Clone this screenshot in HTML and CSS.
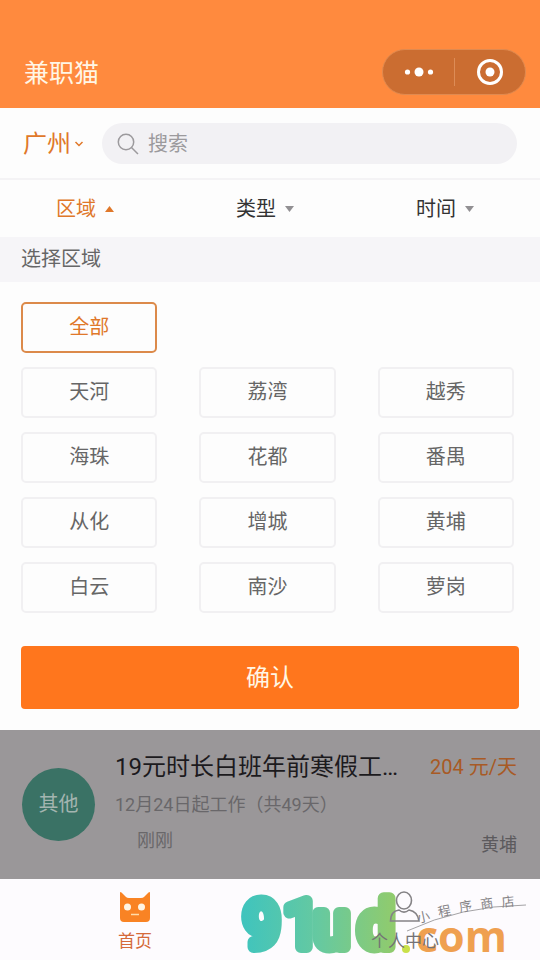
FILE: index.html
```html
<!DOCTYPE html>
<html lang="zh-CN">
<head>
<meta charset="utf-8">
<meta name="viewport" content="width=device-width, initial-scale=1">
<title>兼职猫</title>
<link rel="stylesheet" href="styles.css">
</head>
<body>
<header class="header">
  <h1 class="header-title">兼职猫</h1>
  <div class="capsule">
    <button class="capsule-btn" type="button" aria-label="更多">
      <svg width="32" height="12" viewBox="0 0 32 12" fill="#fff"><circle cx="4.500" cy="6" r="2.600"/><circle cx="16" cy="6" r="4.500"/><circle cx="27.500" cy="6" r="2.600"/></svg>
    </button>
    <button class="capsule-btn" type="button" aria-label="关闭">
      <svg width="28" height="28" viewBox="0 0 28 28"><circle cx="14" cy="14" r="11.500" fill="none" stroke="#fff" stroke-width="3"/><circle cx="14" cy="14" r="4.500" fill="#fff"/></svg>
    </button>
  </div>
</header>

<div class="search-row">
  <button class="city" type="button">广州<svg width="10" height="8" viewBox="0 0 10 8"><path d="M1.500 2 5 5.500 8.500 2" fill="none" stroke="currentColor" stroke-width="1.500"/></svg></button>
  <label class="search">
    <svg width="22" height="22" viewBox="0 0 22 22" fill="none" stroke="#9c9a9d" stroke-width="1.500"><circle cx="9" cy="9" r="7.700"/><path d="M14.500 14.500 21 21"/></svg>
    <input class="search-input" type="search" placeholder="搜索" aria-label="搜索">
  </label>
</div>

<nav class="filters">
  <button class="filter filter-active" type="button">区域<svg width="9" height="6" viewBox="0 0 9 6"><path d="M0 6 4.500 0 9 6Z" fill="currentColor"/></svg></button>
  <button class="filter" type="button">类型<svg width="9" height="6" viewBox="0 0 9 6"><path d="M0 0H9L4.500 6Z" fill="#929093"/></svg></button>
  <button class="filter" type="button">时间<svg width="9" height="6" viewBox="0 0 9 6"><path d="M0 0H9L4.500 6Z" fill="#929093"/></svg></button>
</nav>

<h2 class="section-title">选择区域</h2>

<section class="panel">
  <div class="areas">
    <button class="area area-all" type="button">全部</button>
    <button class="area" type="button">天河</button>
    <button class="area" type="button">荔湾</button>
    <button class="area" type="button">越秀</button>
    <button class="area" type="button">海珠</button>
    <button class="area" type="button">花都</button>
    <button class="area" type="button">番禺</button>
    <button class="area" type="button">从化</button>
    <button class="area" type="button">增城</button>
    <button class="area" type="button">黄埔</button>
    <button class="area" type="button">白云</button>
    <button class="area" type="button">南沙</button>
    <button class="area" type="button">萝岗</button>
  </div>
  <button class="confirm" type="button">确认</button>
</section>

<main class="jobs">
  <article class="job">
    <span class="job-type">其他</span>
    <div class="job-body">
      <div class="job-line">
        <h3 class="job-title">19元时长白班年前寒假工作招聘</h3>
        <span class="job-pay">204 元/天</span>
      </div>
      <p class="job-date">12月24日起工作（共49天）</p>
      <div class="job-line job-foot">
        <span class="job-time">刚刚</span>
        <span class="job-place">黄埔</span>
      </div>
    </div>
  </article>
</main>

<footer class="tabbar">
  <svg class="stamp" width="290" height="80" viewBox="0 0 290 80">
    <defs>
      <linearGradient id="brand" gradientUnits="userSpaceOnUse" x1="3" y1="0" x2="155" y2="0">
        <stop offset="0" stop-color="#40c4bd"/><stop offset="0.500" stop-color="#66c9a0"/><stop offset="1" stop-color="#91cb6c"/>
      </linearGradient>
    </defs>
    <text class="stamp-brand" y="68" x="4 44 74 118" fill="url(#brand)" stroke="url(#brand)">91ud</text>
    <circle cx="166" cy="70" r="4" fill="#c9e04a"/>
    <text class="stamp-com" x="176" y="73">com</text>
    <path d="M167 52Q220 27 286 26" fill="none" stroke="#8d8b8e" stroke-width="0.800"/>
    <g class="stamp-note">
      <text transform="translate(178 44) rotate(-12)">小</text>
      <text transform="translate(199 38) rotate(-12)">程</text>
      <text transform="translate(220 33) rotate(-10)">序</text>
      <text transform="translate(241 30) rotate(-8)">商</text>
      <text transform="translate(262 28) rotate(-6)">店</text>
    </g>
  </svg>
  <a class="tab tab-active" href="#home">
    <svg width="32" height="32" viewBox="0 0 32 32"><path d="M1 2Q1 0 3 2L7 6Q8 7 10 7H22Q24 7 25 6L29 2Q31 0 31 2V27Q31 31 27 31H5Q1 31 1 27Z" fill="#f98324"/><circle cx="8.500" cy="16" r="3.500" fill="#fff5e4"/><circle cx="22.500" cy="16" r="3.500" fill="#fff5e4"/><path d="M12 23.500H20" stroke="#ffdcaa" stroke-width="1.500"/></svg>
    首页
  </a>
  <a class="tab" href="#me">
    <svg width="32" height="32" viewBox="0 0 32 32" fill="none" stroke="#858386" stroke-width="1.600"><ellipse cx="15" cy="9.500" rx="7.500" ry="8.500"/><path d="M10 19C4 20 2 23 1.500 30H30C29 23 26 20 20 19 17 21.500 13 21.500 10 19Z"/></svg>
    个人中心
  </a>
</footer>
</body>
</html>
```
FILE: styles.css
```css
* { box-sizing: border-box; }

body {
  margin: 0;
  min-height: 100vh;
  display: flex;
  flex-direction: column;
  background: #fdfdfd;
  color: #333;
  font-family: Roboto, "Noto Sans CJK SC", sans-serif;
  font-size: 20px;
  line-height: 28px;
}

h1, h2, h3, p { margin: 0; font-weight: 400; }

button {
  margin: 0;
  padding: 0;
  border: 0;
  background: none;
  color: inherit;
  font: inherit;
}

svg { display: block; flex: none; }

.header {
  display: flex;
  align-items: center;
  justify-content: space-between;
  padding: 49px 14px 13px 24px;
  background: #ff8a3e;
}

.header-title { padding-top: 4px; color: #fff6e6; font-size: 25px; }

.capsule {
  display: flex;
  width: 144px;
  height: 46px;
  border: 1px solid #e08a50;
  border-radius: 23px;
  background: #cb6d31;
}

.capsule-btn {
  flex: 1;
  display: flex;
  align-items: center;
  justify-content: center;
}

.capsule-btn + .capsule-btn { position: relative; }

.capsule-btn + .capsule-btn::before {
  content: "";
  position: absolute;
  left: 0;
  top: 8px;
  bottom: 8px;
  width: 1px;
  background: #dd8c56;
}

.search-row {
  display: flex;
  align-items: center;
  gap: 18px;
  padding: 15px 23px 14px;
  border-bottom: 2px solid #f4f3f5;
}

.city {
  display: flex;
  align-items: center;
  gap: 3px;
  color: #e0782a;
  font-size: 24px;
}

.search {
  flex: 1;
  display: flex;
  align-items: center;
  gap: 9px;
  height: 41px;
  padding: 0 15px;
  border-radius: 21px;
  background: #f2f1f4;
}

.search-input {
  flex: 1;
  min-width: 0;
  padding: 0;
  border: 0;
  outline: 0;
  background: none;
  font: inherit;
}

.search-input::placeholder { color: #9c9a9d; }

.filters { display: grid; grid-template-columns: repeat(3, 1fr); }

.filter {
  display: flex;
  align-items: center;
  justify-content: center;
  gap: 9px;
  height: 57px;
  padding-right: 10px;
}

.filter-active { color: #e0782a; }

.section-title {
  padding: 8px 21px 9px;
  background: #f6f5f8;
  color: #666;
  font-size: 20px;
}

.panel { padding: 20px 21px 21px; }

.areas {
  display: grid;
  grid-template-columns: repeat(3, 1fr);
  gap: 14px 42px;
  padding-right: 5px;
}

.area {
  height: 51px;
  padding-bottom: 2px;
  border: 2px solid #f1f0f2;
  border-radius: 5px;
  color: #666;
}

.area-all {
  grid-column: 1;
  border-color: #dc8a4a;
  color: #e0782a;
}

.area-all + .area { grid-column: 1; }

.confirm {
  width: 100%;
  height: 63px;
  margin-top: 33px;
  border-radius: 4px;
  background: #ff761d;
  color: #fff6e6;
  font-size: 24px;
}

.jobs {
  flex: 1;
  background: #9a9799;
}

.job {
  display: flex;
  align-items: flex-start;
  gap: 20px;
  padding: 21px 23px 20px 22px;
}

.job-type {
  flex: none;
  width: 73px;
  height: 73px;
  margin-top: 17px;
  border-radius: 50%;
  background: #3a7265;
  color: #a3b5b0;
  line-height: 72px;
  text-align: center;
}

.job-body { flex: 1; min-width: 0; }

.job-line {
  display: flex;
  align-items: center;
  justify-content: space-between;
  gap: 22px;
}

.job-title {
  width: 290px;
  overflow: hidden;
  color: #1c1a1d;
  font-size: 24px;
  line-height: 32px;
  text-overflow: ellipsis;
  white-space: nowrap;
}

.job-pay { flex: none; color: #a85a25; }

.job-date { padding: 8px 0; color: #69676a; font-size: 18px; }

.job-foot { align-items: flex-end; }

.job-time { padding: 0 0 4px 22px; color: #69676a; font-size: 18px; }

.job-place { color: #5c5a5d; font-size: 18px; }

.tabbar {
  position: relative;
  display: grid;
  grid-template-columns: 1fr 1fr;
  background: #fdfbfe;
}

.tab {
  position: relative;
  display: flex;
  flex-direction: column;
  align-items: center;
  gap: 4px;
  padding: 12px 0 5px;
  color: #747275;
  font-size: 17px;
  text-decoration: none;
}

.tab-active { color: #d56a3a; }

.stamp {
  position: absolute;
  left: 240px;
  top: 0;
}

.stamp-brand {
  font-family: Roboto, sans-serif;
  font-size: 64px;
  font-weight: 400;
  stroke-width: 12px;
  stroke-linejoin: round;
}

.stamp-com {
  fill: #efa050;
  font-family: "Open Sans", sans-serif;
  font-size: 43px;
  font-weight: 700;
}

.stamp-note {
  fill: #858386;
  font-size: 13px;
}
```
